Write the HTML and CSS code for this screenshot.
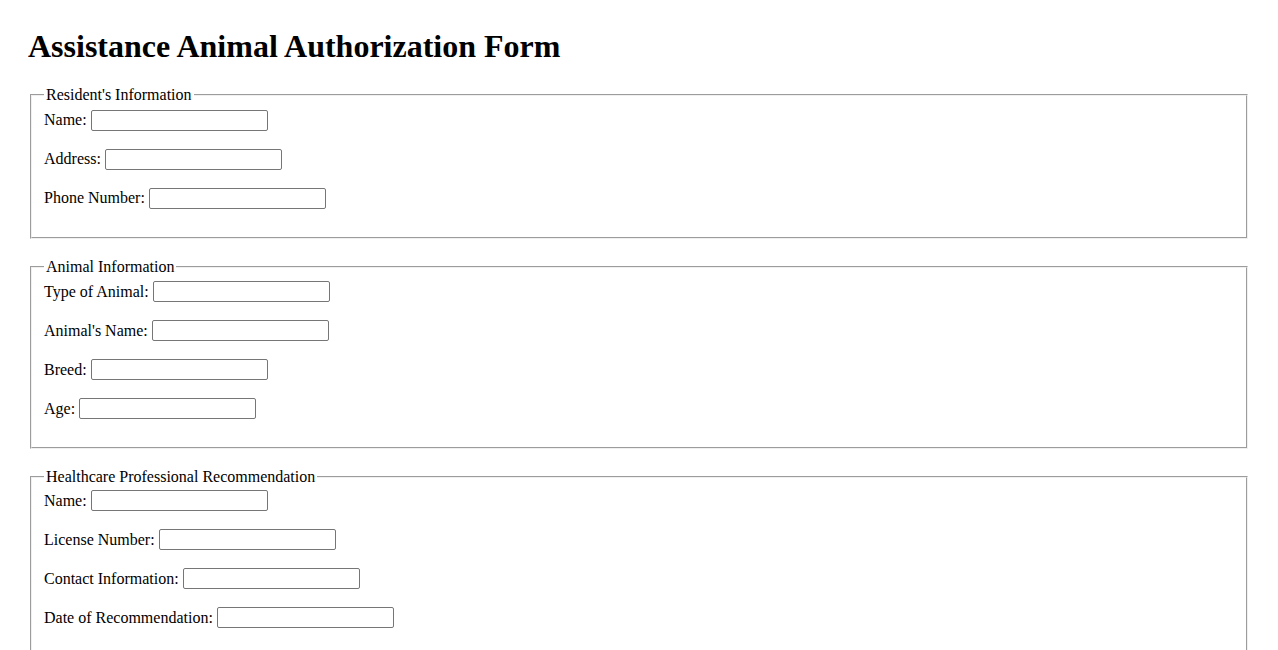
FILE: index.html
```html
<!DOCTYPE html>
<html lang="en">
<head>
<meta charset="utf-8">
<title>Assistance Animal Authorization Form</title>
<link rel="stylesheet" href="styles.css">
</head>
<body>
<h1 class="title">Assistance Animal Authorization Form</h1>
<form class="form">
  <fieldset class="group">
    <legend class="group-title">Resident's Information</legend>
    <div class="row"><label for="r-name">Name:</label><input class="field" id="r-name" type="text"></div>
    <div class="row"><label for="r-address">Address:</label><input class="field" id="r-address" type="text"></div>
    <div class="row"><label for="r-phone">Phone Number:</label><input class="field" id="r-phone" type="text"></div>
  </fieldset>
  <fieldset class="group">
    <legend class="group-title">Animal Information</legend>
    <div class="row"><label for="a-type">Type of Animal:</label><input class="field" id="a-type" type="text"></div>
    <div class="row"><label for="a-name">Animal's Name:</label><input class="field" id="a-name" type="text"></div>
    <div class="row"><label for="a-breed">Breed:</label><input class="field" id="a-breed" type="text"></div>
    <div class="row"><label for="a-age">Age:</label><input class="field" id="a-age" type="text"></div>
  </fieldset>
  <fieldset class="group group-pro">
    <legend class="group-title">Healthcare Professional Recommendation</legend>
    <div class="row"><label for="h-name">Name:</label><input class="field" id="h-name" type="text"></div>
    <div class="row"><label for="h-license">License Number:</label><input class="field" id="h-license" type="text"></div>
    <div class="row"><label for="h-contact">Contact Information:</label><input class="field" id="h-contact" type="text"></div>
    <div class="row"><label for="h-date">Date of Recommendation:</label><input class="field" id="h-date" type="text"></div>
  </fieldset>
</form>
</body>
</html>
```
FILE: styles.css
```css
html, body {
  background: #ffffff;
}
body {
  margin: 28px;
  font-family: "Liberation Serif", "Times New Roman", serif;
  font-size: 16px;
  color: #000000;
}
.title {
  font-size: 32px;
  font-weight: bold;
  margin: 0 0 21px 0;
  line-height: 37px;
}
.form {
  margin: 0;
}
.group {
  margin: 0 2px 19px 2px;
  padding: 5.6px 12px 10px 12px;
  border: 2px groove rgb(240, 240, 240);
  min-width: 0;
}
.group-title {
  padding: 0 2px;
  line-height: 18px;
}
.row {
  display: flex;
  align-items: center;
  gap: 4px;
  height: 21px;
  margin-bottom: 18px;
}
.group-pro {
  padding-top: 4px;
}
.field {
  box-sizing: border-box;
  width: 177px;
  height: 21px;
  margin: 0;
  padding: 1px 2px;
  border: 1px solid #767676;
  border-radius: 2px;
  background: #ffffff;
  font-family: "Liberation Sans", Arial, sans-serif;
  font-size: 13.33px;
}
```
